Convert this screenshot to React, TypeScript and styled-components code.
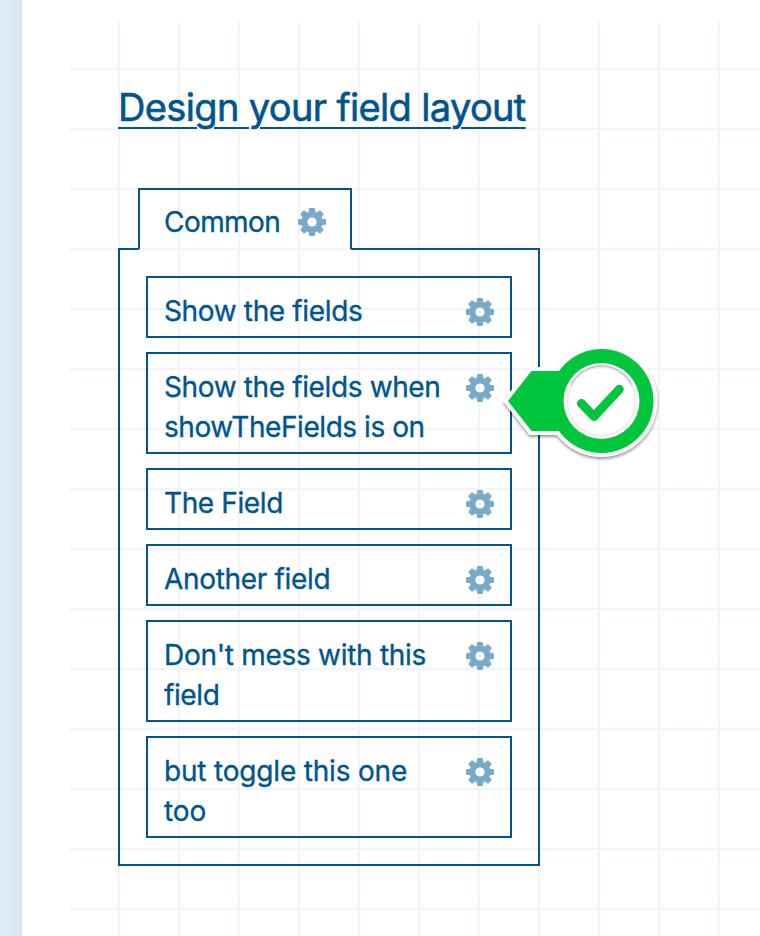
import React from "react";
import styled, { createGlobalStyle } from "styled-components";

const INK = "#00558f";

const GlobalStyle = createGlobalStyle`
  *, *::before, *::after { box-sizing: border-box; }
  body {
    margin: 0;
    overflow: hidden;
    background: #fff;
    color: ${INK};
    font-family: Inter, "Liberation Sans", sans-serif;
  }
`;

const Page = styled.div`
  display: flex;
  width: 760px;
  height: 936px;
  overflow: hidden;
`;

const SideEdge = styled.div`
  flex: 0 0 22px;
  background: linear-gradient(90deg, #dfecf5 0, #dce7f3 20px, #d5e2f0 20px, #d9e4f1 22px);
`;

const Main = styled.main`
  flex: 1;
  display: flex;
  padding: 22px 0 0 48px;
`;

const Canvas = styled.section`
  flex: 1;
  padding: 57px 0 0 48px;
  background-image:
    linear-gradient(90deg, #f3f3fd 2px, transparent 2px),
    linear-gradient(180deg, #f3f3fd 2px, transparent 2px);
  background-size: 60px 60px;
  background-position: 48px 0, 0 46px;
`;

const Title = styled.h1`
  margin: 0 0 53px;
  height: 56px;
  line-height: 56px;
  font-size: 38px;
  font-weight: 400;
  letter-spacing: -0.64px;
  white-space: nowrap;
  -webkit-text-stroke: 0.6px ${INK};
  text-decoration: underline;
  text-decoration-thickness: 2px;
  text-underline-offset: 6px;
`;

const Layout = styled.div`
  position: relative;
  width: 422px;
`;

const TabRow = styled.div`
  display: flex;
  align-items: flex-end;
`;

const Ledge = styled.div<{ $side: "left" | "right" }>`
  height: 2px;
  background: ${INK};
  ${(p) =>
    p.$side === "left"
      ? "flex: 0 0 22px; margin-right: -2px; border-bottom-right-radius: 2px;"
      : "flex: 1; margin-left: -2px; border-bottom-left-radius: 2px;"}
`;

const Tab = styled.div`
  display: flex;
  align-items: center;
  justify-content: space-between;
  width: 214px;
  height: 60px;
  margin-bottom: 2px;
  padding: 6px 24px 0;
  border: 2px solid ${INK};
  border-bottom: 0;
`;

const Panel = styled.div`
  display: flex;
  flex-direction: column;
  gap: 14px;
  padding: 26px;
  border: 2px solid ${INK};
  border-top: 0;
`;

const Item = styled.div`
  display: flex;
  justify-content: space-between;
  align-items: flex-start;
  padding: 13px 16px 5px;
  border: 2px solid ${INK};
`;

const Lines = styled.div`
  display: flex;
  flex-direction: column;
`;

const Line = styled.span<{ $track: number }>`
  font-size: 28px;
  line-height: 40px;
  white-space: nowrap;
  letter-spacing: ${(p) => p.$track}px;
  -webkit-text-stroke: 0.35px ${INK};
`;

const GearIcon = styled.svg`
  flex: none;
  display: block;
  width: 28px;
  height: 28px;
  color: #78a9c7;
`;

const ItemGear = styled.div`
  padding-top: 7px;
`;

const Marker = styled.svg`
  position: absolute;
  left: 378px;
  top: 152px;
  width: 170px;
  height: 130px;
  overflow: visible;
  filter: drop-shadow(0 2px 1.5px rgba(0, 0, 0, 0.4));
`;

function Gear() {
  return (
    <GearIcon viewBox="-14 -14 28 28" aria-hidden="true">
      <mask id="gear-hole">
        <rect x="-14" y="-14" width="28" height="28" fill="#fff" />
        <circle r="4.6" fill="#000" />
      </mask>
      <g fill="currentColor" mask="url(#gear-hole)">
        <circle r="10.5" />
        {[0, 45, 90, 135, 180, 225, 270, 315].map((angle) => (
          <path key={angle} d="M-3.5 -9L-2.8 -13.5Q-2.7 -14 -2.2 -14H2.2Q2.7 -14 2.8 -13.5L3.5 -9Z" transform={`rotate(${angle})`} />
        ))}
      </g>
    </GearIcon>
  );
}

function CheckMarker() {
  return (
    <Marker viewBox="496 340 170 130" aria-hidden="true">
      <g fill="#fff" stroke="#fff" strokeWidth="8">
        <path d="M508 401L531.5 371H570V431H531.5Z" />
        <circle cx="601.5" cy="401" r="52" />
      </g>
      <g fill="#00c63e">
        <path d="M508 401L531.5 371H570V431H531.5Z" />
        <circle cx="601.5" cy="401" r="52" />
      </g>
      <circle cx="601.5" cy="401" r="38" fill="#fff" />
      <circle cx="601.5" cy="401.5" r="34" fill="none" stroke="#e8e8e8" strokeWidth="1.4" />
      <path d="M571 385A34 34 0 0 1 632 385" fill="none" stroke="#c2c2c2" strokeWidth="1.4" />
      <path
        d="M581.5 403.5L594 416.5L619.3 389.3"
        fill="none"
        stroke="#00c63e"
        strokeWidth="9"
        strokeLinecap="round"
        strokeLinejoin="round"
      />
    </Marker>
  );
}

type TextLine = { text: string; track: number };

const fields: TextLine[][] = [
  [{ text: "Show the fields", track: -0.35 }],
  [
    { text: "Show the fields when", track: -0.37 },
    { text: "showTheFields is on", track: -0.44 },
  ],
  [{ text: "The Field", track: -0.38 }],
  [{ text: "Another field", track: -0.33 }],
  [
    { text: "Don't mess with this", track: -0.29 },
    { text: "field", track: -0.4 },
  ],
  [
    { text: "but toggle this one", track: -0.18 },
    { text: "too", track: -0.1 },
  ],
];

export default function App() {
  return (
    <>
      <GlobalStyle />
      <Page>
        <SideEdge />
        <Main>
          <Canvas>
            <Title>Design your field layout</Title>
            <Layout>
              <TabRow>
                <Ledge $side="left" />
                <Tab>
                  <Line $track={-0.55}>Common</Line>
                  <Gear />
                </Tab>
                <Ledge $side="right" />
              </TabRow>
              <Panel>
                {fields.map((lines) => (
                  <Item key={lines[0].text}>
                    <Lines>
                      {lines.map((line) => (
                        <Line key={line.text} $track={line.track}>
                          {line.text}
                        </Line>
                      ))}
                    </Lines>
                    <ItemGear>
                      <Gear />
                    </ItemGear>
                  </Item>
                ))}
              </Panel>
              <CheckMarker />
            </Layout>
          </Canvas>
        </Main>
      </Page>
    </>
  );
}
